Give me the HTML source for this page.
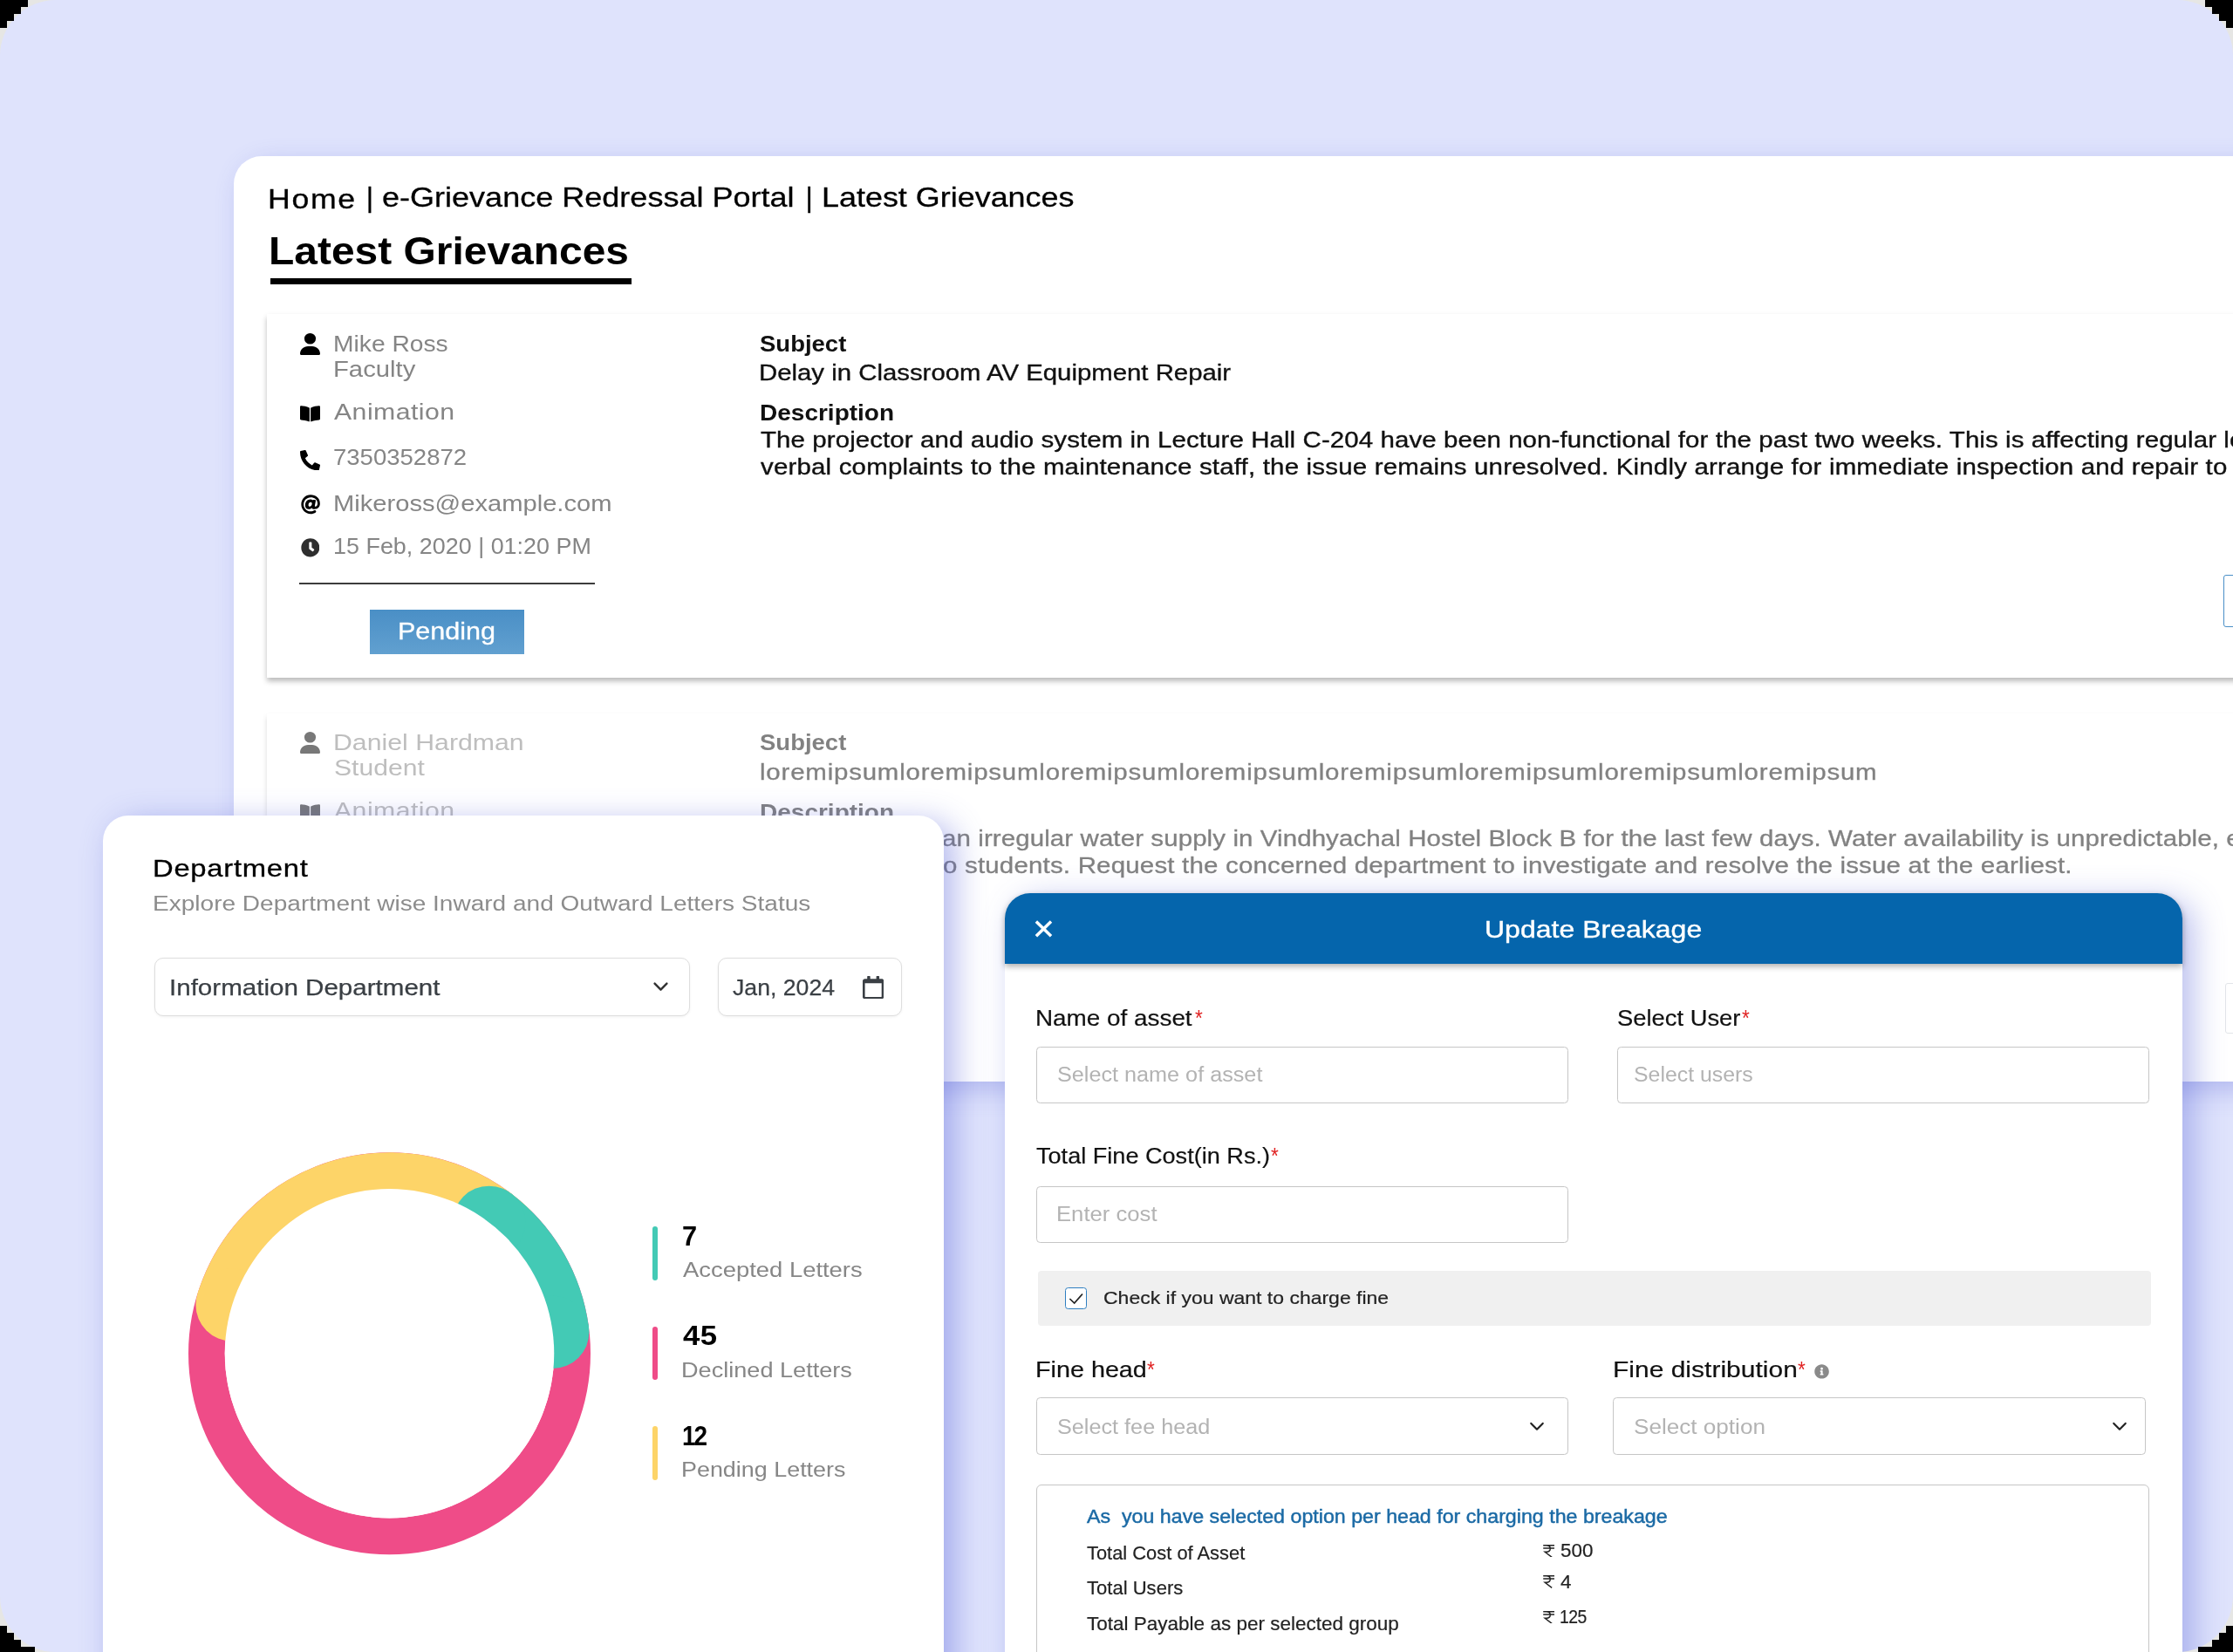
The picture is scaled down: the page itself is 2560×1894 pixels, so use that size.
<!DOCTYPE html>
<html lang="en"><head><meta charset="utf-8"><title>Campus portal UI collage</title>
<style>
html,body{margin:0;padding:0}
body{width:2560px;height:1894px;position:relative;overflow:hidden;background:#e6e6e4;font-family:"Liberation Sans", sans-serif;}
.a{position:absolute;display:block}
.t{position:absolute;white-space:pre;line-height:1;transform-origin:0 0;}
.k{position:absolute;background:#000}
#bg{will-change:transform;position:absolute;left:0;top:0;width:2560px;height:1894px;border-radius:64px;background:#dfe3fc;overflow:hidden}
#main{position:absolute;left:268px;top:179px;width:2400px;height:1060.5px;background:#fff;border-radius:32px 0 0 32px;box-shadow:10px 10px 30px rgba(84,96,214,.32)}
.card{position:absolute;left:306px;width:2400px;height:416.5px;background:#fff;box-shadow:0 4px 6px rgba(0,0,0,.27)}
#card1{top:360px}
#card2{top:817.5px;opacity:.53;height:440px;clip-path:inset(-12px -12px 18px -12px)}
#dept{position:absolute;left:117.5px;top:935px;width:964px;height:1100px;background:#fff;border-radius:29px;box-shadow:12px 8px 36px rgba(84,96,214,.45)}
#modal{position:absolute;left:1152px;top:1024.2px;width:1350px;height:1000px;background:#fff;border-radius:29px 29px 0 0;box-shadow:12px 8px 36px rgba(84,96,214,.41)}
#mhead{position:absolute;left:0;top:0;width:1350px;height:81.2px;background:#0565ac;border-radius:29px 29px 0 0;box-shadow:0 3px 7px rgba(0,0,0,.33)}
.inp{position:absolute;box-sizing:border-box;border:1.4px solid #c6c6c6;border-radius:4.5px;background:#fff}
.sel{z-index:0;position:absolute;box-sizing:border-box;border:1.5px solid #dedede;border-radius:10px;background:#fff;box-shadow:0 1px 3px rgba(0,0,0,.06)}
</style></head><body>
<div id="bg">
<div id="main">
<div class="t" style="left:38.70px;top:34.00px;font-size:31px;color:#000;letter-spacing:1.458px;transform:scaleX(1.1500);-webkit-text-stroke:0.3px #000;">Home</div>
<div class="t" style="left:151.70px;top:31.00px;font-size:32px;color:#000;-webkit-text-stroke:0.3px #000;">|</div>
<div class="t" style="left:170.07px;top:31.00px;font-size:32px;color:#000;transform:scaleX(1.1260);-webkit-text-stroke:0.3px #000;">e-Grievance Redressal Portal</div>
<div class="t" style="left:655.40px;top:31.00px;font-size:32px;color:#000;-webkit-text-stroke:0.3px #000;">|</div>
<div class="t" style="left:674.46px;top:31.00px;font-size:32px;color:#000;transform:scaleX(1.1224);-webkit-text-stroke:0.3px #000;">Latest Grievances</div>
<div class="t" style="left:40.40px;top:88.00px;font-size:43.5px;color:#000;font-weight:700;transform:scaleX(1.1020);">Latest Grievances</div>
<div class="a" style="left:41.60000000000002px;top:140.39999999999998px;width:414.3px;height:6.3px;background:#000"></div>
</div>
<div class="card" id="card1">
<svg class="a" style="left:38.30px;top:21.60px" width="23.00" height="25.10" viewBox="0 0 448 512" preserveAspectRatio="none"><path fill="#000" d="M224 256A128 128 0 1 0 224 0a128 128 0 1 0 0 256zm-45.7 48C79.8 304 0 383.8 0 482.3C0 498.7 13.3 512 29.7 512H418.3c16.4 0 29.7-13.3 29.7-29.7C448 383.8 368.2 304 269.7 304H178.3z"/></svg>
<svg class="a" style="left:38.30px;top:104.00px" width="23.00" height="20.70" viewBox="0 0 576 512" preserveAspectRatio="none"><path fill="#000" d="M542.22 32.05c-54.8 3.11-163.72 14.43-230.96 55.59-4.64 2.84-7.27 7.89-7.27 13.17v363.87c0 11.55 12.63 18.85 23.28 13.49 69.18-34.82 169.23-44.32 218.7-46.92 16.89-.89 30.02-14.43 30.02-30.66V62.75c.01-17.71-15.35-31.74-33.77-30.7zM264.73 87.64C197.5 46.48 88.58 35.17 33.78 32.05 15.36 31.01 0 45.04 0 62.75V400.6c0 16.24 13.13 29.78 30.02 30.66 49.49 2.6 149.59 12.11 218.77 46.95 10.62 5.35 23.21-1.94 23.21-13.46V100.63c0-5.29-2.62-10.14-7.27-12.99z"/></svg>
<svg class="a" style="left:38.30px;top:156.00px" width="23.00" height="23.40" viewBox="0 0 512 512" preserveAspectRatio="none"><path fill="#000" d="M497.39 361.8l-112-48a24 24 0 0 0-28 6.9l-49.6 60.6A370.66 370.66 0 0 1 130.6 204.11l60.6-49.6a23.94 23.94 0 0 0 6.9-28l-48-112A24.16 24.16 0 0 0 122.6.61l-104 24A24 24 0 0 0 0 48c0 256.5 207.9 464 464 464a24 24 0 0 0 23.4-18.6l24-104a24.29 24.29 0 0 0-14.01-27.6z"/></svg>
<svg class="a" style="left:38.60px;top:207.00px" width="22.20" height="22.50" viewBox="0 0 512 512" preserveAspectRatio="none"><path fill="#000" d="M256 8C118.941 8 8 118.919 8 256c0 137.059 110.919 248 248 248 48.154 0 95.342-14.14 135.408-40.223 12.005-7.815 14.625-24.288 5.552-35.372l-10.177-12.433c-7.671-9.371-21.179-11.667-31.373-5.129C325.92 429.757 291.314 440 256 440c-101.458 0-184-82.542-184-184S154.542 72 256 72c100.139 0 184 57.619 184 160 0 38.786-21.093 79.742-58.17 83.693-17.349-.454-16.91-12.857-13.476-30.024l23.433-121.11C394.653 149.75 383.308 136 368.225 136h-44.981a13.518 13.518 0 0 0-13.432 11.993l-.01.092c-14.697-17.901-40.448-21.775-59.971-21.775-74.58 0-137.831 62.234-137.831 151.46 0 65.303 36.785 105.87 96 105.87 26.984 0 57.369-15.637 74.991-38.333 9.522 34.104 40.613 34.103 70.71 34.103C462.609 379.41 504 307.798 504 232 504 95.653 394.023 8 256 8zm-21.68 304.43c-22.249 0-36.07-15.623-36.07-40.771 0-44.993 30.779-72.729 58.63-72.729 22.292 0 35.601 15.241 35.601 40.77 0 45.061-33.875 72.73-58.161 72.73z"/></svg>
<svg class="a" style="left:38.70px;top:257.00px" width="21.70" height="21.80" viewBox="0 0 512 512" preserveAspectRatio="none"><path fill="#2e2e2e" d="M256 8C119 8 8 119 8 256s111 248 248 248 248-111 248-248S393 8 256 8zm57.1 350.1L224.9 294c-3.1-2.3-4.9-5.9-4.9-9.7V116c0-6.6 5.4-12 12-12h48c6.6 0 12 5.4 12 12v137.7l63.5 46.2c5.4 3.9 6.5 11.4 2.6 16.8l-28.2 38.8c-3.9 5.3-11.4 6.5-16.8 2.6z"/></svg>
<div class="a" style="left:37.10000000000002px;top:308.29999999999995px;width:339.3px;height:2px;background:#3c3c3c"></div>
<div class="a" style="left:118.10000000000002px;top:338.9px;width:176.8px;height:50.7px;background:linear-gradient(180deg,#4a8fc6,#61a0d0)"></div>
<div class="t" style="left:76.15px;top:21.00px;font-size:26.3px;color:#858585;transform:scaleX(1.0730);">Mike Ross</div>
<div class="t" style="left:76.08px;top:50.00px;font-size:26.3px;color:#858585;transform:scaleX(1.1123);">Faculty</div>
<div class="t" style="left:77.40px;top:99.00px;font-size:26.3px;color:#858585;letter-spacing:0.390px;transform:scaleX(1.1500);">Animation</div>
<div class="t" style="left:565.30px;top:22.00px;font-size:25.6px;color:#111;font-weight:700;transform:scaleX(1.0741);">Subject</div>
<div class="t" style="left:563.71px;top:55.00px;font-size:25.6px;color:#111;transform:scaleX(1.1469);-webkit-text-stroke:0.35px #111;">Delay in Classroom AV Equipment Repair</div>
<div class="t" style="left:564.91px;top:101.00px;font-size:25.6px;color:#111;font-weight:700;transform:scaleX(1.0944);">Description</div>
<div class="t" style="left:565.50px;top:132.00px;font-size:25.6px;color:#111;letter-spacing:0.088px;transform:scaleX(1.1500);-webkit-text-stroke:0.35px #111;">The projector and audio system in Lecture Hall C-204 have been non-functional for the past two weeks. This is affecting regular lectures and presentations. Despite</div>
<div class="t" style="left:565.50px;top:163.00px;font-size:25.6px;color:#111;letter-spacing:0.169px;transform:scaleX(1.1500);-webkit-text-stroke:0.35px #111;">verbal complaints to the maintenance staff, the issue remains unresolved. Kindly arrange for immediate inspection and repair to avoid further disruption.</div>
<div class="t" style="left:76.35px;top:151.00px;font-size:26.3px;color:#858585;transform:scaleX(1.0468);">7350352872</div>
<div class="t" style="left:76.08px;top:204.00px;font-size:26.3px;color:#858585;transform:scaleX(1.1084);">Mikeross@example.com</div>
<div class="t" style="left:76.25px;top:253.00px;font-size:26.3px;color:#858585;transform:scaleX(1.0239);">15 Feb, 2020 | 01:20 PM</div>
<div class="t" style="left:149.74px;top:351.00px;font-size:27px;color:#fff;transform:scaleX(1.1304);-webkit-text-stroke:0.3px #fff;">Pending</div>
<div class="a" style="left:2243px;top:299px;width:80px;height:60px;box-sizing:border-box;border:1.7px solid #4a8fc7;border-radius:3px"></div>
</div>
<div class="card" id="card2">
<svg class="a" style="left:38.30px;top:21.50px" width="23.00" height="25.10" viewBox="0 0 448 512" preserveAspectRatio="none"><path fill="#000" d="M224 256A128 128 0 1 0 224 0a128 128 0 1 0 0 256zm-45.7 48C79.8 304 0 383.8 0 482.3C0 498.7 13.3 512 29.7 512H418.3c16.4 0 29.7-13.3 29.7-29.7C448 383.8 368.2 304 269.7 304H178.3z"/></svg>
<svg class="a" style="left:38.30px;top:103.90px" width="23.00" height="20.70" viewBox="0 0 576 512" preserveAspectRatio="none"><path fill="#000" d="M542.22 32.05c-54.8 3.11-163.72 14.43-230.96 55.59-4.64 2.84-7.27 7.89-7.27 13.17v363.87c0 11.55 12.63 18.85 23.28 13.49 69.18-34.82 169.23-44.32 218.7-46.92 16.89-.89 30.02-14.43 30.02-30.66V62.75c.01-17.71-15.35-31.74-33.77-30.7zM264.73 87.64C197.5 46.48 88.58 35.17 33.78 32.05 15.36 31.01 0 45.04 0 62.75V400.6c0 16.24 13.13 29.78 30.02 30.66 49.49 2.6 149.59 12.11 218.77 46.95 10.62 5.35 23.21-1.94 23.21-13.46V100.63c0-5.29-2.62-10.14-7.27-12.99z"/></svg>
<div class="t" style="left:76.00px;top:20.50px;font-size:26.3px;color:#858585;letter-spacing:0.010px;transform:scaleX(1.1500);">Daniel Hardman</div>
<div class="t" style="left:77.15px;top:49.50px;font-size:26.3px;color:#858585;transform:scaleX(1.1456);">Student</div>
<div class="t" style="left:77.40px;top:98.50px;font-size:26.3px;color:#858585;letter-spacing:0.390px;transform:scaleX(1.1500);">Animation</div>
<div class="t" style="left:565.30px;top:21.50px;font-size:25.6px;color:#111;font-weight:700;transform:scaleX(1.0741);">Subject</div>
<div class="t" style="left:564.85px;top:55.50px;font-size:25.6px;color:#111;letter-spacing:0.702px;transform:scaleX(1.1500);-webkit-text-stroke:0.35px #111;">loremipsumloremipsumloremipsumloremipsumloremipsumloremipsumloremipsumloremipsum</div>
<div class="t" style="left:564.91px;top:101.50px;font-size:25.6px;color:#111;font-weight:700;transform:scaleX(1.0944);">Description</div>
<div class="t" style="left:774.35px;top:131.50px;font-size:25.6px;color:#111;letter-spacing:0.098px;transform:scaleX(1.1500);-webkit-text-stroke:0.35px #111;">an irregular water supply in Vindhyachal Hostel Block B for the last few days. Water availability is unpredictable, especially during peak hours, causing</div>
<div class="t" style="left:774.85px;top:162.50px;font-size:25.6px;color:#111;letter-spacing:0.179px;transform:scaleX(1.1500);-webkit-text-stroke:0.35px #111;">o students. Request the concerned department to investigate and resolve the issue at the earliest.</div>
<div class="a" style="left:2244.5px;top:309.5px;width:80px;height:58px;box-sizing:border-box;border:1.5px solid #c9cfd6;border-radius:3px"></div>
</div>
<div id="dept">
<div class="sel" style="left:59.35px;top:163.05px;width:614.1px;height:67.2px"></div>
<div class="sel" style="left:705.15px;top:163.05px;width:211.3px;height:67.2px"></div>
<svg class="a" style="left:628.5px;top:187px" width="24" height="20" viewBox="0 0 24 20"><path d="M4.6 5.6 L11.5 12.6 L18.4 5.6" fill="none" stroke="#333" stroke-width="2.5" stroke-linecap="round" stroke-linejoin="round"/></svg>
<svg class="a" style="left:871.10px;top:183.60px" width="24.30" height="26.40" viewBox="0 0 448 512" preserveAspectRatio="none"><path fill="#3a3f44" d="M400 64h-48V12c0-6.6-5.4-12-12-12h-40c-6.6 0-12 5.4-12 12v52H160V12c0-6.6-5.4-12-12-12h-40c-6.6 0-12 5.4-12 12v52H48C21.5 64 0 85.5 0 112v352c0 26.5 21.5 48 48 48h352c26.5 0 48-21.5 48-48V112c0-26.5-21.5-48-48-48zm-6 400H54c-3.3 0-6-2.7-6-6V160h352v298c0 3.3-2.7 6-6 6z"/></svg>
<svg class="a" style="left:82.5px;top:365px" width="500" height="500" viewBox="200 1300 500 500">
<circle cx="446.5" cy="1551.75" r="209.625" fill="none" stroke="#ef4c88" stroke-width="41.75"/>
<g fill="#fdd468"><path d="M226.31 1483.59A230.5 230.5 0 0 1 609.49 1388.76L578.55 1419.70A186.75 186.75 0 0 0 268.10 1496.53Z"/><circle cx="266.19" cy="1495.94" r="41.75"/></g>
<g fill="#43cab5"><path d="M585.86 1368.15A230.5 230.5 0 0 1 675.05 1521.86L631.67 1527.54A186.75 186.75 0 0 0 559.41 1403.00Z"/><circle cx="560.62" cy="1401.40" r="41.75"/><circle cx="633.66" cy="1527.28" r="41.75"/></g>
<circle cx="446.5" cy="1551.75" r="188.75" fill="#fff"/>
</svg>
<div class="a" style="left:630.5px;top:470.9000000000001px;width:6px;height:62.0px;border-radius:3px;background:#43cab5"></div>
<div class="a" style="left:630.5px;top:585.8px;width:6px;height:61.4px;border-radius:3px;background:#ef4c88"></div>
<div class="a" style="left:630.5px;top:700.4000000000001px;width:6px;height:61.6px;border-radius:3px;background:#fdd468"></div>
<div class="t" style="left:57.40px;top:46.00px;font-size:28.5px;color:#000;letter-spacing:0.635px;transform:scaleX(1.1500);-webkit-text-stroke:0.3px #000;">Department</div>
<div class="t" style="left:57.43px;top:89.00px;font-size:24.7px;color:#8c8c8c;transform:scaleX(1.1358);">Explore Department wise Inward and Outward Letters Status</div>
<div class="t" style="left:76.25px;top:184.00px;font-size:26.3px;color:#3a3f44;transform:scaleX(1.1239);-webkit-text-stroke:0.25px #3a3f44;">Information Department</div>
<div class="t" style="left:722.60px;top:184.00px;font-size:26.3px;color:#3a3f44;transform:scaleX(1.0132);-webkit-text-stroke:0.25px #3a3f44;">Jan, 2024</div>
<div class="t" style="left:664.81px;top:467.00px;font-size:31px;color:#000;font-weight:700;transform:scaleX(0.9933);">7</div>
<div class="t" style="left:665.80px;top:509.00px;font-size:24.7px;color:#868686;transform:scaleX(1.1102);">Accepted Letters</div>
<div class="t" style="left:665.80px;top:581.00px;font-size:31px;color:#000;font-weight:700;letter-spacing:0.313px;transform:scaleX(1.1200);">45</div>
<div class="t" style="left:663.60px;top:624.00px;font-size:24.7px;color:#868686;transform:scaleX(1.0980);">Declined Letters</div>
<div class="t" style="left:664.90px;top:696.00px;font-size:31px;color:#000;font-weight:700;letter-spacing:-2.130px;transform:scaleX(0.9000);">12</div>
<div class="t" style="left:663.62px;top:738.00px;font-size:24.7px;color:#868686;transform:scaleX(1.0898);">Pending Letters</div>
</div>
<div id="modal">
<div id="mhead"></div>
<svg class="a" style="left:32px;top:28.59999999999991px" width="24" height="24" viewBox="0 0 24 24"><path d="M3.9 3.6 L21.0 20.2 M21.0 3.6 L3.9 20.2" stroke="#fff" stroke-width="3.5" stroke-linecap="butt"/></svg>
<div class="inp" style="left:35.5px;top:175.7px;width:610.7px;height:64.8px"></div>
<div class="inp" style="left:701.6px;top:175.7px;width:610.9px;height:64.8px"></div>
<div class="inp" style="left:35.5px;top:336.1px;width:610.7px;height:64.6px"></div>
<div class="inp" style="left:35.5px;top:578.3px;width:610.7px;height:65.2px"></div>
<div class="inp" style="left:697.2px;top:578.3px;width:610.9px;height:65.2px"></div>
<div class="inp" style="left:35.5px;top:677.6px;width:1276.3px;height:300px;border-radius:6px"></div>
<div class="a" style="left:37.6px;top:432.6px;width:1276.4px;height:62.8px;border-radius:4px;background:#f0f0f0"></div>
<div class="a" style="left:68.8px;top:451.4px;width:25.4px;height:25.6px;box-sizing:border-box;border:1.5px solid #2f7fc1;border-radius:3.5px;background:#fff"></div>
<svg class="a" style="left:68.8px;top:451.4px" width="25.4" height="25.6" viewBox="0 0 25.4 25.6"><path d="M5.4 13 L10.7 18 L20 7.5" fill="none" stroke="#222" stroke-width="1.7"/></svg>
<svg class="a" style="left:598.3px;top:601.8px" width="24" height="20" viewBox="0 0 24 20"><path d="M5.3 5.9 L12 12.7 L18.7 5.9" fill="none" stroke="#222" stroke-width="2.2" stroke-linecap="round" stroke-linejoin="round"/></svg>
<svg class="a" style="left:1265.7px;top:601.8px" width="24" height="20" viewBox="0 0 24 20"><path d="M5.3 5.9 L12 12.7 L18.7 5.9" fill="none" stroke="#222" stroke-width="2.2" stroke-linecap="round" stroke-linejoin="round"/></svg>
<svg class="a" style="left:927.70px;top:540.20px" width="17.10" height="16.80" viewBox="0 0 512 512" preserveAspectRatio="none"><path fill="#8a8a8a" d="M256 8C119.043 8 8 119.083 8 256c0 136.997 111.043 248 248 248s248-111.003 248-248C504 119.083 392.957 8 256 8zm0 110c23.196 0 42 18.804 42 42s-18.804 42-42 42-42-18.804-42-42 18.804-42 42-42zm56 254c0 6.627-5.373 12-12 12h-88c-6.627 0-12-5.373-12-12v-24c0-6.627 5.373-12 12-12h12v-64h-12c-6.627 0-12-5.373-12-12v-24c0-6.627 5.373-12 12-12h64c6.627 0 12 5.373 12 12v100h12c6.627 0 12 5.373 12 12v24z"/></svg>
<svg class="a" style="left:616.80px;top:746.40px" width="13.40" height="14.40" viewBox="0 0 62 66" preserveAspectRatio="none"><path fill="none" stroke="#222" stroke-width="6.6" stroke-linecap="butt" stroke-linejoin="miter" d="M1 3.5H61M1 18.5H61M1 3.5H18C45 3.5 45 38 18 38H10L47 66"/></svg>
<svg class="a" style="left:616.80px;top:782.00px" width="13.40" height="14.40" viewBox="0 0 62 66" preserveAspectRatio="none"><path fill="none" stroke="#222" stroke-width="6.6" stroke-linecap="butt" stroke-linejoin="miter" d="M1 3.5H61M1 18.5H61M1 3.5H18C45 3.5 45 38 18 38H10L47 66"/></svg>
<svg class="a" style="left:616.80px;top:822.50px" width="13.40" height="14.40" viewBox="0 0 62 66" preserveAspectRatio="none"><path fill="none" stroke="#222" stroke-width="6.6" stroke-linecap="butt" stroke-linejoin="miter" d="M1 3.5H61M1 18.5H61M1 3.5H18C45 3.5 45 38 18 38H10L47 66"/></svg>
<div class="t" style="left:550.05px;top:26.80px;font-size:28.5px;color:#fff;transform:scaleX(1.1234);-webkit-text-stroke:0.4px #fff;">Update Breakage</div>
<div class="t" style="left:35.26px;top:129.80px;font-size:26px;color:#111;transform:scaleX(1.0715);-webkit-text-stroke:0.2px #111;">Name of asset</div>
<div class="t" style="left:217.50px;top:129.80px;font-size:26px;color:#e02020;transform:scaleX(0.8700);">*</div>
<div class="t" style="left:701.75px;top:129.80px;font-size:26px;color:#111;transform:scaleX(1.0522);-webkit-text-stroke:0.2px #111;">Select User</div>
<div class="t" style="left:845.20px;top:129.80px;font-size:26px;color:#e02020;transform:scaleX(0.8700);">*</div>
<div class="t" style="left:59.68px;top:195.80px;font-size:24.7px;color:#b3b3b3;transform:scaleX(1.0210);">Select name of asset</div>
<div class="t" style="left:720.59px;top:195.80px;font-size:24.7px;color:#b3b3b3;transform:scaleX(1.0067);">Select users</div>
<div class="t" style="left:36.20px;top:287.80px;font-size:26px;color:#111;transform:scaleX(1.0420);-webkit-text-stroke:0.2px #111;">Total Fine Cost(in Rs.)</div>
<div class="t" style="left:305.20px;top:287.80px;font-size:26px;color:#e02020;transform:scaleX(0.8700);">*</div>
<div class="t" style="left:59.12px;top:355.80px;font-size:24.7px;color:#b3b3b3;transform:scaleX(1.0395);">Enter cost</div>
<div class="t" style="left:113.01px;top:452.80px;font-size:21px;color:#222;transform:scaleX(1.0947);-webkit-text-stroke:0.2px #222;">Check if you want to charge fine</div>
<div class="t" style="left:34.79px;top:532.80px;font-size:26px;color:#111;transform:scaleX(1.1054);-webkit-text-stroke:0.2px #111;">Fine head</div>
<div class="t" style="left:163.00px;top:532.80px;font-size:26px;color:#e02020;transform:scaleX(0.8700);">*</div>
<div class="t" style="left:696.60px;top:532.80px;font-size:26px;color:#111;letter-spacing:0.039px;transform:scaleX(1.1500);-webkit-text-stroke:0.2px #111;">Fine distribution</div>
<div class="t" style="left:908.50px;top:532.80px;font-size:26px;color:#e02020;transform:scaleX(0.8700);">*</div>
<div class="t" style="left:59.78px;top:599.80px;font-size:24.7px;color:#b3b3b3;transform:scaleX(1.0215);">Select fee head</div>
<div class="t" style="left:720.54px;top:599.80px;font-size:24.7px;color:#b3b3b3;transform:scaleX(1.0574);">Select option</div>
<div class="t" style="left:93.50px;top:703.80px;font-size:21.8px;color:#1b6aa5;transform:scaleX(1.0646);-webkit-text-stroke:0.45px #1b6aa5;">As&nbsp; you have selected option per head for charging the breakage</div>
<div class="t" style="left:93.50px;top:746.80px;font-size:21.5px;color:#222;transform:scaleX(1.0180);-webkit-text-stroke:0.2px #222;">Total Cost of Asset</div>
<div class="t" style="left:93.50px;top:786.80px;font-size:21.5px;color:#222;transform:scaleX(1.0255);-webkit-text-stroke:0.2px #222;">Total Users</div>
<div class="t" style="left:93.50px;top:827.80px;font-size:21.5px;color:#222;transform:scaleX(1.0469);-webkit-text-stroke:0.2px #222;">Total Payable as per selected group</div>
<div class="t" style="left:636.70px;top:743.80px;font-size:21.5px;color:#222;transform:scaleX(1.0414);-webkit-text-stroke:0.2px #222;">500</div>
<div class="t" style="left:636.70px;top:779.80px;font-size:21.5px;color:#222;transform:scaleX(1.0417);-webkit-text-stroke:0.2px #222;">4</div>
<div class="t" style="left:635.80px;top:819.80px;font-size:21.5px;color:#222;letter-spacing:-0.513px;transform:scaleX(0.9000);-webkit-text-stroke:0.2px #222;">125</div>
</div>
</div>
<div class="k" style="left:0;top:0px;width:32px;height:8px"></div>
<div class="k" style="left:2528px;top:0px;width:32px;height:8px"></div>
<div class="k" style="left:0;top:8px;width:24px;height:8px"></div>
<div class="k" style="left:2536px;top:8px;width:24px;height:8px"></div>
<div class="k" style="left:0;top:16px;width:16px;height:8px"></div>
<div class="k" style="left:2544px;top:16px;width:16px;height:8px"></div>
<div class="k" style="left:0;top:24px;width:8px;height:8px"></div>
<div class="k" style="left:2552px;top:24px;width:8px;height:8px"></div>
<div class="k" style="left:0;top:1888px;width:40px;height:6px"></div>
<div class="k" style="left:2520px;top:1888px;width:40px;height:6px"></div>
<div class="k" style="left:0;top:1880px;width:24px;height:8px"></div>
<div class="k" style="left:2536px;top:1880px;width:24px;height:8px"></div>
<div class="k" style="left:0;top:1872px;width:16px;height:8px"></div>
<div class="k" style="left:2544px;top:1872px;width:16px;height:8px"></div>
<div class="k" style="left:0;top:1864px;width:8px;height:8px"></div>
<div class="k" style="left:2552px;top:1864px;width:8px;height:8px"></div>
</body></html>
